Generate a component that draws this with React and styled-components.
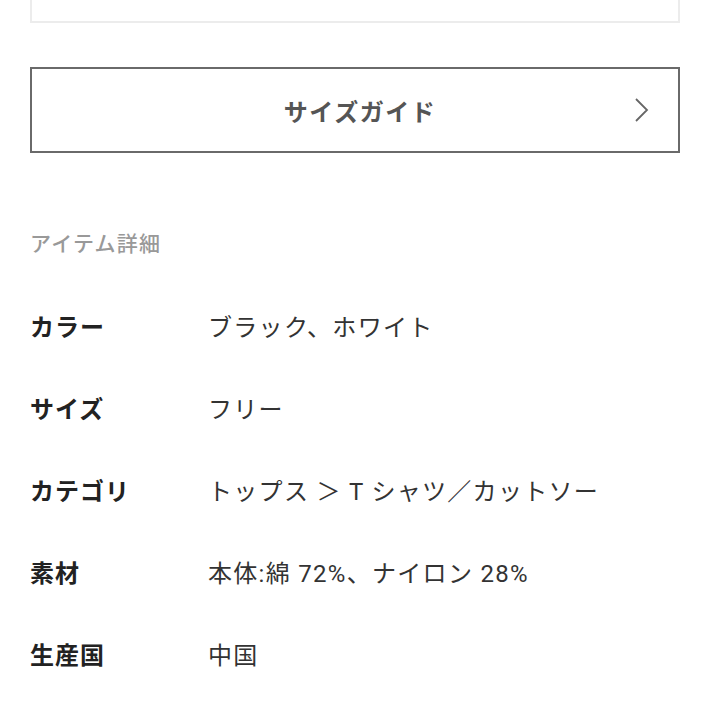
import React from "react";
import styled, { createGlobalStyle } from "styled-components";

const GlobalStyle = createGlobalStyle`
  body {
    margin: 0;
    background: #fff;
    font-family: "Noto Sans CJK JP", "Noto Sans", sans-serif;
  }
`;

const Page = styled.div`
  width: 709px;
  height: 709px;
  overflow: hidden;
  padding: 0 29px 0 30px;
  box-sizing: border-box;
`;

const TopBox = styled.div`
  height: 21px;
  border: 2px solid #ececec;
  border-top: none;
`;

const GuideButton = styled.button`
  width: 100%;
  height: 86px;
  margin-top: 44px;
  padding: 0 0 0 10px;
  border: 2px solid #6a6a6a;
  background: #fff;
  display: flex;
  align-items: center;
  justify-content: center;
  position: relative;
  font-family: inherit;
  font-size: 24px;
  font-weight: 700;
  color: #555;
  letter-spacing: 1.5px;
  cursor: pointer;
`;

const Chevron = styled.svg`
  position: absolute;
  right: 28px;
  top: 50%;
  transform: translateY(-50%);
`;

const Heading = styled.h3`
  margin: 74px 0 27px;
  font-size: 21px;
  line-height: 30px;
  font-weight: 500;
  color: #999;
  letter-spacing: 1.2px;
`;

const Table = styled.dl`
  margin: 0;
  display: grid;
  grid-template-columns: 178px 1fr;
  grid-auto-rows: 82px;
  align-items: center;
`;

const Label = styled.dt`
  font-size: 24px;
  font-weight: 700;
  color: #222;
  letter-spacing: 1px;
`;

const Value = styled.dd`
  margin: 0;
  font-family: Roboto, "Noto Sans CJK JP", sans-serif;
  font-size: 24px;
  color: #333;
  letter-spacing: 1.3px;
  white-space: nowrap;
`;

const details = [
  ["カラー", "ブラック、ホワイト"],
  ["サイズ", "フリー"],
  ["カテゴリ", "トップス ＞ T シャツ／カットソー"],
  ["素材", "本体:綿 72%、ナイロン 28%"],
  ["生産国", "中国"],
];

export default function App() {
  return (
    <Page>
      <GlobalStyle />
      <TopBox />
      <GuideButton>
        サイズガイド
        <Chevron width="16" height="26" viewBox="0 0 16 26">
          <path d="M2 2 L13 13 L2 24" fill="none" stroke="#666" strokeWidth="1.8" />
        </Chevron>
      </GuideButton>
      <Heading>アイテム詳細</Heading>
      <Table>
        {details.map(([k, v]) => (
          <React.Fragment key={k}>
            <Label>{k}</Label>
            <Value>{v}</Value>
          </React.Fragment>
        ))}
      </Table>
    </Page>
  );
}
